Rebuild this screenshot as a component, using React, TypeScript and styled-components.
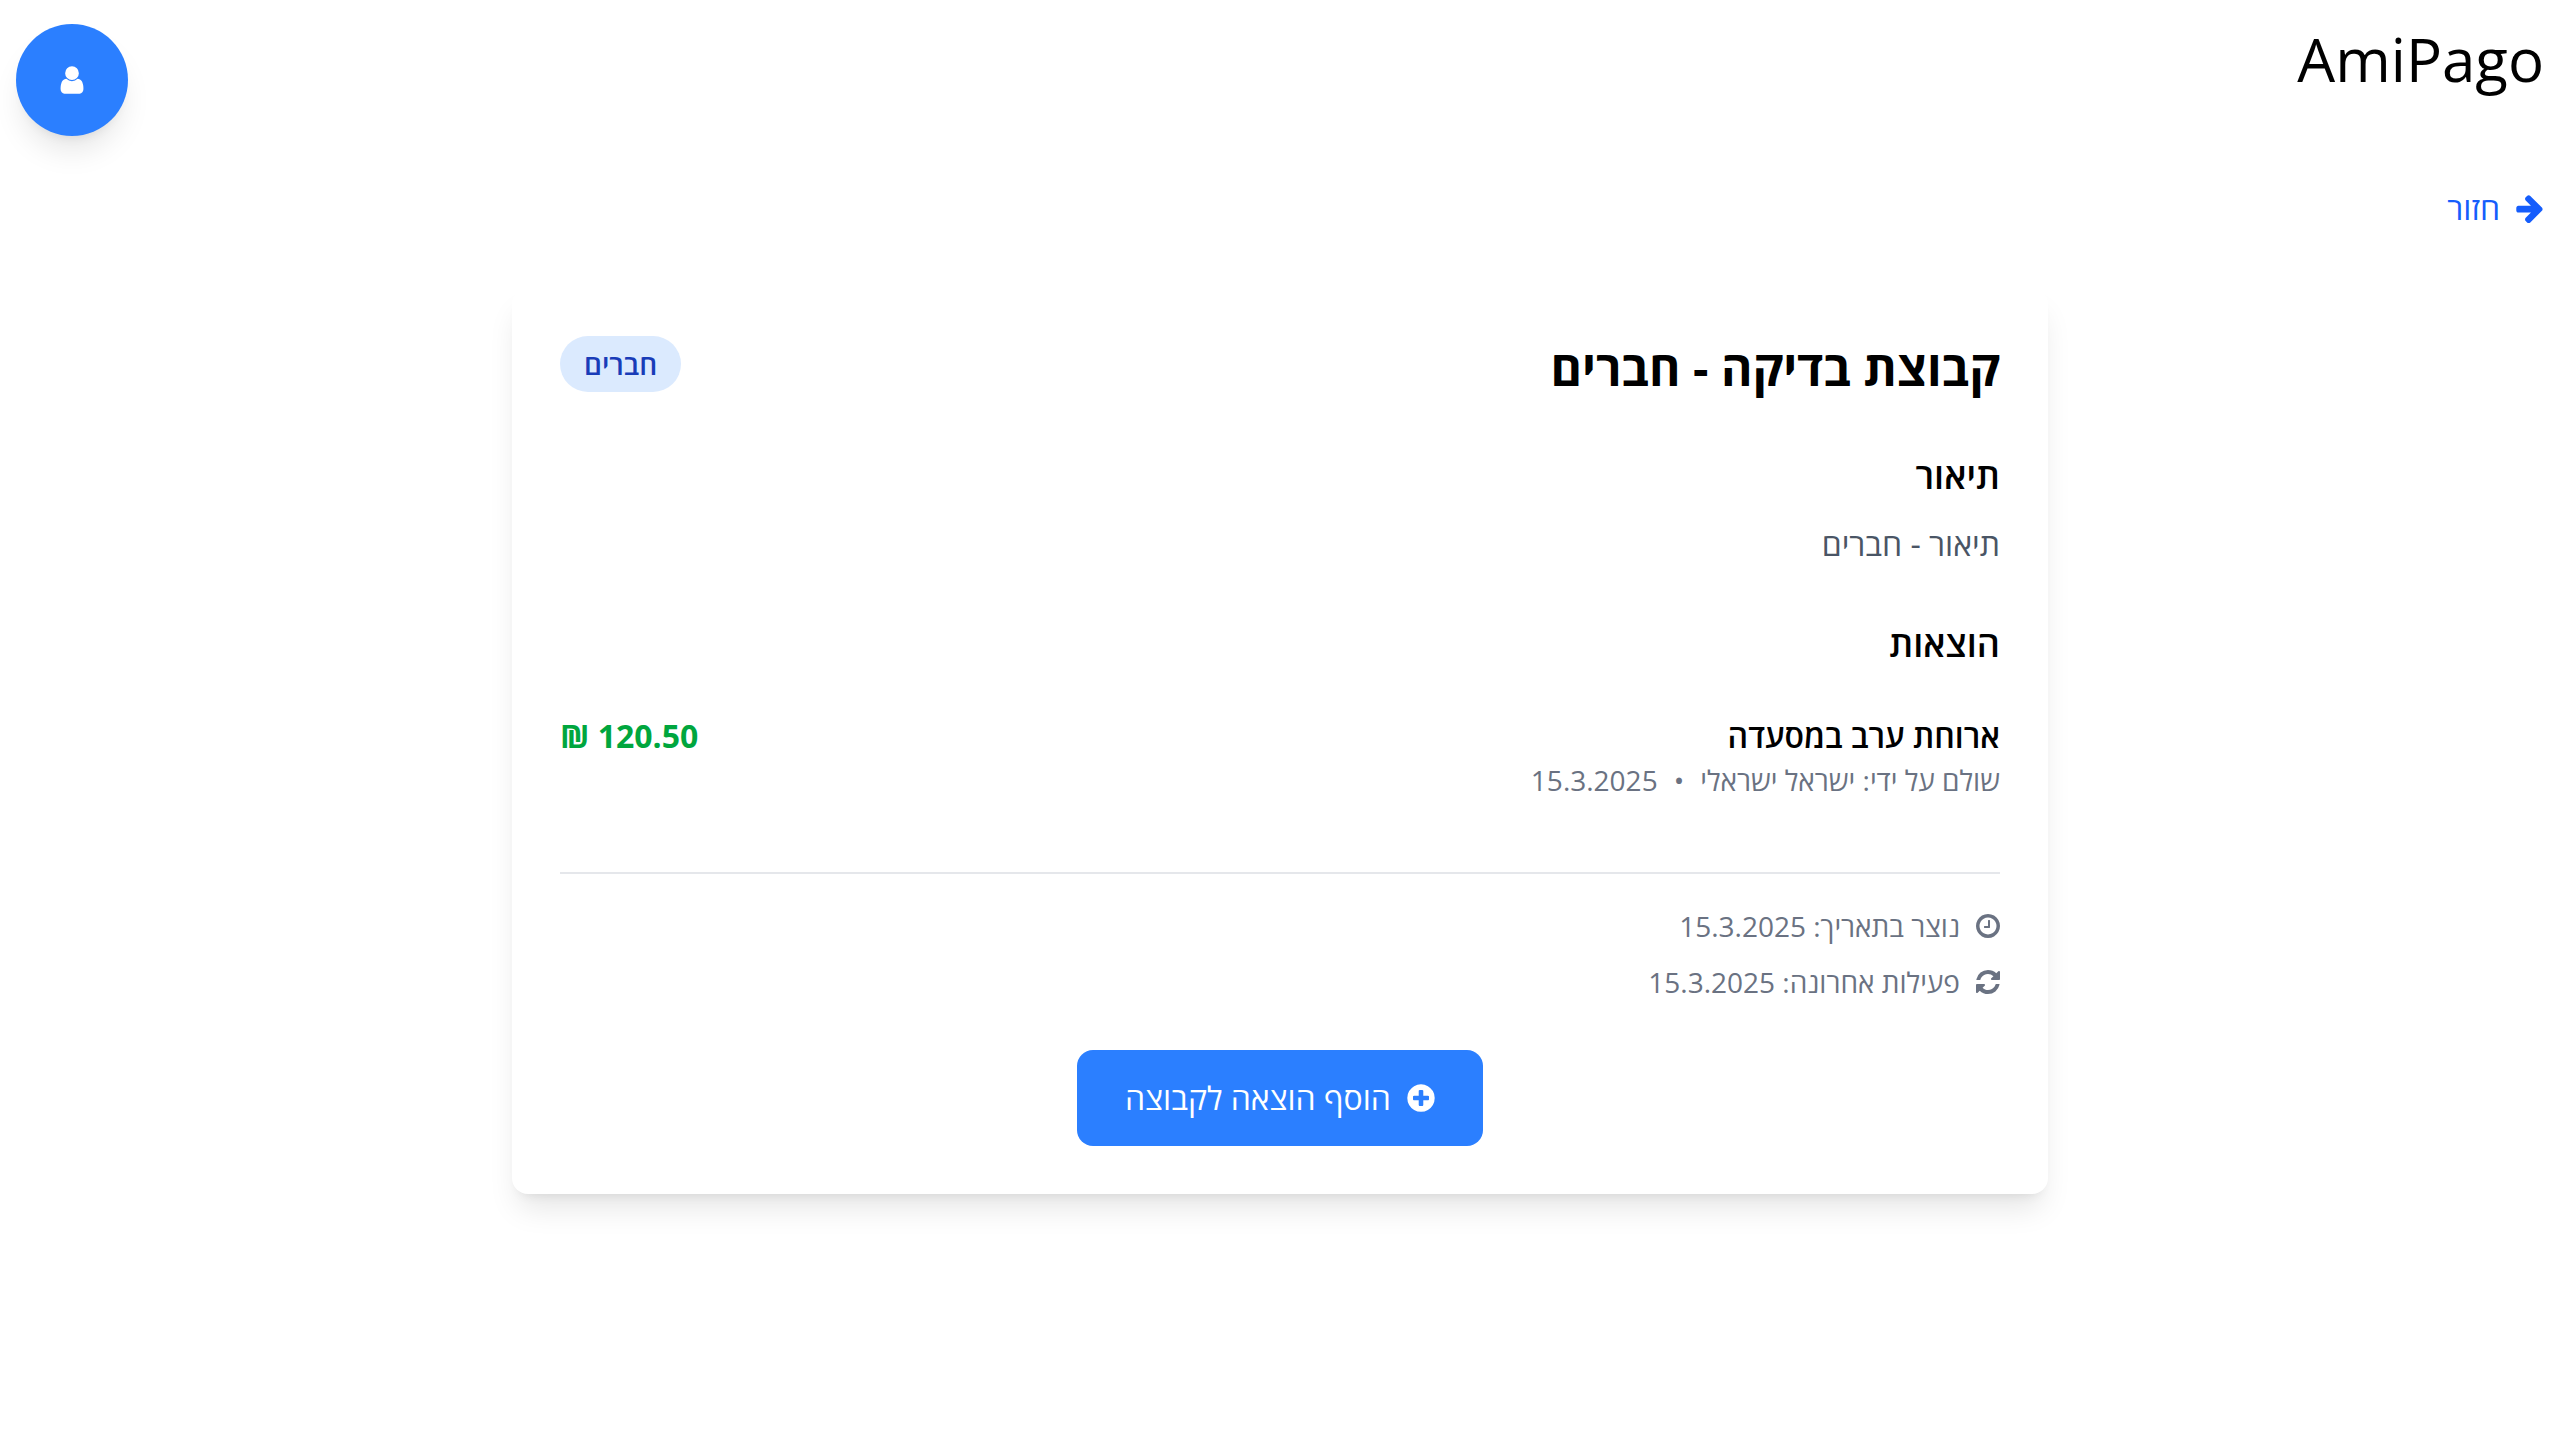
import React from "react";
import styled, { createGlobalStyle } from "styled-components";

const color = {
  primary: "#2b7fff",
  link: "#155dfc",
  badgeBg: "#dbeafe",
  badgeText: "#193cb8",
  body: "#4a5565",
  muted: "#6a7282",
  line: "#e5e7eb",
  amount: "#00a63e",
};

const liftedShadow =
  "0 20px 30px -6px rgba(0, 0, 0, 0.1), 0 8px 12px -8px rgba(0, 0, 0, 0.1)";

const GlobalStyle = createGlobalStyle`
  *, *::before, *::after { box-sizing: border-box; }
  body {
    margin: 0;
    background: #fff;
    color: #000;
    font-family: "Open Sans", "Noto Sans", sans-serif;
    font-size: 32px;
    line-height: 48px;
  }
  h1, h2, h3, p, ul { margin: 0; padding: 0; }
  button { font: inherit; border: 0; cursor: pointer; }
`;

const Page = styled.div`
  min-height: 100vh;
`;

const Header = styled.header`
  display: flex;
  justify-content: space-between;
  align-items: flex-start;
  padding: 24px 16px;
`;

const Brand = styled.div`
  font-size: 60px;
  line-height: 70px;
`;

const ProfileButton = styled.button`
  display: flex;
  align-items: center;
  justify-content: center;
  width: 112px;
  height: 112px;
  padding: 0;
  border-radius: 50%;
  background: ${color.primary};
  color: #fff;
  box-shadow: ${liftedShadow};
`;

const Main = styled.main`
  display: flex;
  flex-direction: column;
  gap: 56px;
  padding: 24px 16px;
`;

const BackLink = styled.a`
  display: flex;
  align-items: center;
  align-self: flex-start;
  gap: 16px;
  color: ${color.link};
  text-decoration: none;
`;

const Card = styled.article`
  display: flex;
  flex-direction: column;
  gap: 48px;
  align-self: center;
  width: 100%;
  max-width: 1536px;
  padding: 48px;
  border-radius: 16px;
  background: #fff;
  box-shadow: ${liftedShadow};
`;

const CardHeader = styled.div`
  display: flex;
  justify-content: space-between;
  align-items: flex-start;
`;

const Title = styled.h1`
  font-size: 48px;
  line-height: 64px;
  font-weight: 700;
`;

const Badge = styled.span`
  padding: 8px 24px;
  border-radius: 28px;
  background: ${color.badgeBg};
  color: ${color.badgeText};
  font-size: 28px;
  line-height: 40px;
  font-weight: 600;
`;

const Section = styled.section`
  display: flex;
  flex-direction: column;
  gap: 16px;
`;

const SectionTitle = styled.h2`
  font-size: 36px;
  line-height: 56px;
  font-weight: 600;
`;

const Description = styled.p`
  color: ${color.body};
`;

const ExpenseList = styled.ul`
  list-style: none;
`;

const Expense = styled.li`
  display: flex;
  justify-content: space-between;
  align-items: flex-start;
  padding: 24px 0;
`;

const ExpenseName = styled.h3`
  font-size: 32px;
  font-weight: 600;
`;

const ExpenseMeta = styled.p`
  color: ${color.muted};
  font-size: 28px;
  line-height: 40px;
`;

const Dot = styled.span`
  margin: 0 16px;
`;

const Amount = styled.span`
  color: ${color.amount};
  font-weight: 700;
`;

const Facts = styled.div`
  display: flex;
  flex-direction: column;
  gap: 16px;
  padding-top: 32px;
  border-top: 2px solid ${color.line};
  color: ${color.muted};
  font-size: 28px;
  line-height: 40px;
`;

const Fact = styled.p`
  display: flex;
  align-items: center;
  gap: 16px;
`;

const AddButton = styled.button`
  display: flex;
  align-items: center;
  align-self: center;
  gap: 16px;
  padding: 24px 48px;
  border-radius: 16px;
  background: ${color.primary};
  color: #fff;
`;

const glyphs = {
  user: "M1536 1399q0 109-62.5 187t-150.5 78H469q-88 0-150.5-78T256 1399q0-85 8.5-160.5t31.5-152 58.5-131 94-89T583 832q131 128 313 128t313-128q76 0 134.5 34.5t94 89 58.5 131 31.5 152 8.5 160.5zm-256-887q0 159-112.5 271.5T896 896 624.5 783.5 512 512t112.5-271.5T896 128t271.5 112.5T1280 512z",
  arrow:
    "M1600 960q0 54-37 91l-651 651q-39 37-91 37-51 0-90-37l-75-75q-38-38-38-91t38-91l293-293H245q-52 0-84.5-37.5T128 1024V896q0-53 32.5-90.5T245 768h704L656 474q-38-36-38-90t38-90l75-75q38-38 90-38 53 0 91 38l651 651q37 35 37 90z",
  plus: "M1344 960V832q0-26-19-45t-45-19h-256V512q0-26-19-45t-45-19H832q-26 0-45 19t-19 45v256H512q-26 0-45 19t-19 45v128q0 26 19 45t45 19h256v256q0 26 19 45t45 19h128q26 0 45-19t19-45v-256h256q26 0 45-19t19-45zm320-64q0 209-103 385.5T1281.5 1561 896 1664t-385.5-103T231 1281.5 128 896t103-385.5T510.5 231 896 128t385.5 103T1561 510.5 1664 896z",
  refresh:
    "M1639 1056q0 5-1 7-64 268-268 434.5T892 1664q-146 0-282.5-55T366 1452l-129 129q-19 19-45 19t-45-19-19-45v-448q0-26 19-45t45-19h448q26 0 45 19t19 45-19 45l-137 137q71 66 161 102t187 36q134 0 250-65t186-179q11-17 53-117 8-23 30-23h192q13 0 22.5 9.5t9.5 22.5zm25-800v448q0 26-19 45t-45 19h-448q-26 0-45-19t-19-45 19-45l138-138Q1097 384 896 384q-134 0-250 65T460 628q-11 17-53 117-8 23-30 23H178q-13 0-22.5-9.5T146 736v-7q65-268 270-434.5T896 128q146 0 284 55.5T1425 340l130-129q19-19 45-19t45 19 19 45z",
  clock:
    "M1024 544v448q0 14-9 23t-23 9H672q-14 0-23-9t-9-23v-64q0-14 9-23t23-9h224V544q0-14 9-23t23-9h64q14 0 23 9t9 23zm416 352q0-148-73-273t-198-198-273-73-273 73-198 198-73 273 73 273 198 198 273 73 273-73 198-198 73-273zm224 0q0 209-103 385.5T1281.5 1561 896 1664t-385.5-103T231 1281.5 128 896t103-385.5T510.5 231 896 128t385.5 103T1561 510.5 1664 896z",
};

interface IconProps {
  name: keyof typeof glyphs;
  small?: boolean;
}

function Icon({ name, small = false }: IconProps) {
  return (
    <svg
      width={small ? 24 : 28}
      height={small ? 28 : 32}
      viewBox={small ? "128 0 1536 1792" : "112 0 1568 1792"}
      fill="currentColor"
      aria-hidden="true"
    >
      <path d={glyphs[name]} />
    </svg>
  );
}

interface ExpenseItem {
  name: string;
  paidBy: string;
  date: string;
  amount: number;
}

const expenses: ExpenseItem[] = [
  {
    name: "ארוחת ערב במסעדה",
    paidBy: "ישראל ישראלי",
    date: "15.3.2025",
    amount: 120.5,
  },
];

export default function App() {
  return (
    <Page dir="rtl" lang="he">
      <GlobalStyle />
      <Header>
        <Brand>AmiPago</Brand>
        <ProfileButton type="button" aria-label="פרופיל">
          <Icon name="user" />
        </ProfileButton>
      </Header>
      <Main>
        <BackLink href="#">
          <Icon name="arrow" />
          חזור
        </BackLink>
        <Card>
          <CardHeader>
            <Title>קבוצת בדיקה - חברים</Title>
            <Badge>חברים</Badge>
          </CardHeader>
          <Section>
            <SectionTitle>תיאור</SectionTitle>
            <Description>תיאור - חברים</Description>
          </Section>
          <Section>
            <SectionTitle>הוצאות</SectionTitle>
            <ExpenseList>
              {expenses.map((item) => (
                <Expense key={item.name}>
                  <div>
                    <ExpenseName>{item.name}</ExpenseName>
                    <ExpenseMeta>
                      שולם על ידי: {item.paidBy}
                      <Dot>•</Dot>
                      {item.date}
                    </ExpenseMeta>
                  </div>
                  <Amount>{item.amount.toFixed(2)} ₪</Amount>
                </Expense>
              ))}
            </ExpenseList>
          </Section>
          <Facts>
            <Fact>
              <Icon name="clock" small />
              נוצר בתאריך: 15.3.2025
            </Fact>
            <Fact>
              <Icon name="refresh" small />
              פעילות אחרונה: 15.3.2025
            </Fact>
          </Facts>
          <AddButton type="button">
            <Icon name="plus" />
            הוסף הוצאה לקבוצה
          </AddButton>
        </Card>
      </Main>
    </Page>
  );
}
